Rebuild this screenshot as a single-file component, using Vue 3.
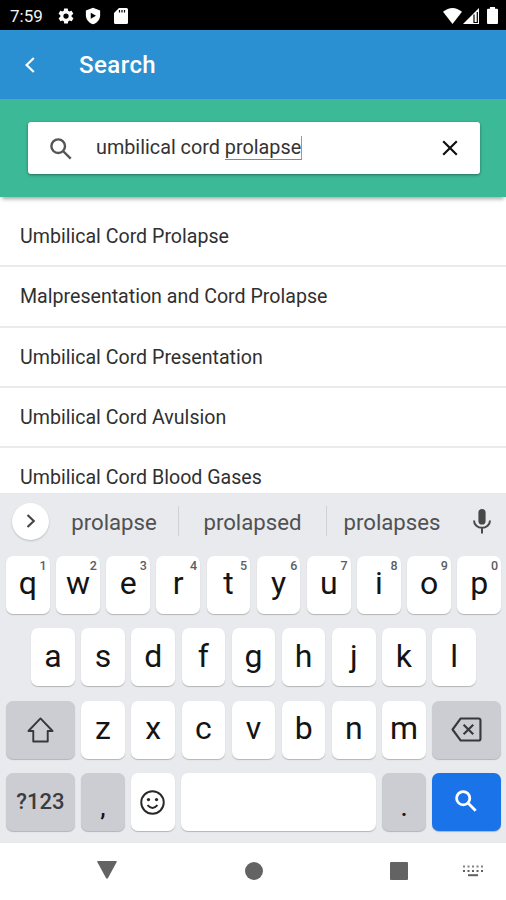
<script setup>
const results = [
  'Umbilical Cord Prolapse',
  'Malpresentation and Cord Prolapse',
  'Umbilical Cord Presentation',
  'Umbilical Cord Avulsion',
  'Umbilical Cord Blood Gases'
]
const topRow = [...'qwertyuiop'].map((letter, i) => ({ letter, hint: (i + 1) % 10 }))
const homeRow = [...'asdfghjkl']
const bottomRow = [...'zxcvbnm']
</script>

<template>
  <div class="screen">
    <div class="status">
      <span class="time">7:59</span>
      <svg class="st-gear" viewBox="0 0 24 24"><path fill="#fff" fill-rule="evenodd" d="M19.4 13c.1-.3.1-.7.1-1s0-.7-.1-1l2.1-1.6c.2-.2.3-.4.1-.7l-2-3.4c-.1-.3-.4-.3-.6-.3l-2.5 1c-.5-.4-1.1-.7-1.7-1l-.4-2.600c0-.3-.2-.4-.5-.4h-4c-.2 0-.5.100-.5.400L9 5c-.6.300-1.200.600-1.700 1l-2.500-1c-.2-.1-.5 0-.6.300l-2 3.400c-.1.200-.1.500.1.700L4.500 11c0 .3-.1.700-.1 1s0 .7.100 1l-2.100 1.600c-.2.200-.3.400-.1.700l2 3.400c.1.300.4.300.6.300l2.500-1c.5.400 1.100.700 1.700 1l.4 2.600c0 .3.200.4.500.4h4c.2 0 .5-.1.500-.4L15 19c.6-.3 1.200-.6 1.700-1l2.500 1c.2.100.5 0 .6-.3l2-3.400c.1-.2.100-.5-.1-.7L19.400 13zM12 15.500a3.500 3.500 0 1 1 0-7 3.500 3.500 0 0 1 0 7z"/></svg>
      <svg class="st-shield" viewBox="0 0 24 24"><path fill="#fff" d="M12 1 2.500 4.500V11c0 5.600 4 10.400 9.500 12 5.500-1.600 9.500-6.400 9.500-12V4.500z"/><path d="M9 7.500v8l7-4z"/></svg>
      <svg class="st-card" viewBox="0 0 14 16"><path fill="#fff" d="M5 0h7.500Q14 0 14 1.500v13q0 1.500-1.500 1.500h-11Q0 16 0 14.500V5z"/><path stroke="#000" stroke-width="1.200" d="M5.500 2v2.500M8 2v2.500M10.500 2v2.500"/></svg>
      <span class="grow"></span>
      <svg class="st-wifi" viewBox="0 0 19 16"><path fill="#fff" d="M0 3.800Q9.500-3.800 19 3.800L9.500 16z"/></svg>
      <svg class="st-cell" viewBox="0 0 16 16"><path fill="#fff" d="M16 0v16H0z"/><path stroke="#000" stroke-width="1.200" fill="none" d="M11 6.500v8h3.300V4"/></svg>
      <svg class="st-batt" viewBox="0 0 11 17"><path fill="#fff" d="M3 0h5v1.800h2Q11 1.800 11 3v13q0 1-1 1H1q-1 0-1-1V3q0-1.200 1-1.200h2z"/></svg>
    </div>

    <header class="header">
      <svg class="back" viewBox="0 0 10 16"><path fill="none" stroke="#fff" stroke-width="2.200" d="M8.800 1 1.600 8l7.200 7"/></svg>
      <h1>Search</h1>
    </header>

    <section class="band">
      <div class="box">
        <svg class="lens" viewBox="0 0 22 22"><circle cx="8.200" cy="8.200" r="6.800"/><path d="m13 13 7.700 7.700"/></svg>
        <div class="query">umbilical cord <span class="composing">prolapse</span></div>
        <svg class="clear" viewBox="0 0 16 16"><path d="m1.200 1.200 13.600 13.600M14.800 1.200 1.200 14.800"/></svg>
      </div>
    </section>

    <ul class="list">
      <li v-for="r in results" :key="r">{{ r }}</li>
    </ul>

    <section class="keyboard">
      <div class="suggest">
        <span class="expand"><svg viewBox="0 0 10 14"><path fill="none" stroke="#444" stroke-width="2.100" d="m1.500 1 6.300 6-6.300 6"/></svg></span>
        <span class="word first">prolapse</span>
        <span class="word second">prolapsed</span>
        <span class="word third">prolapses</span>
        <svg class="mic" viewBox="0 0 18 25"><rect x="5.400" y="0" width="7.200" height="15.500" rx="3.600" fill="#484848"/><path fill="none" stroke="#484848" stroke-width="2" d="M1 11.500a8 7.300 0 0 0 16 0M9 18.800v5.700"/></svg>
      </div>

      <div class="keys">
        <div class="row">
          <span v-for="k in topRow" :key="k.letter" class="key"><span>{{ k.letter }}</span><small>{{ k.hint }}</small></span>
        </div>
        <div class="row home">
          <span v-for="k in homeRow" :key="k" class="key"><span>{{ k }}</span></span>
        </div>
        <div class="row">
          <span class="key wide grey"><svg class="shift" viewBox="0 0 28 27"><path fill="none" stroke="#37383b" stroke-width="2" stroke-linejoin="round" d="M14 1.500 1.500 14.500H6.500v11h15v-11h5z"/></svg></span>
          <span v-for="k in bottomRow" :key="k" class="key"><span>{{ k }}</span></span>
          <span class="key wide grey"><svg class="erase" viewBox="0 0 32 26"><path fill="none" stroke="#37383b" stroke-width="2.200" stroke-linejoin="round" d="M10 1.500h18.500q2 0 2 2v19q0 2-2 2H10L1.500 13zM13 8l10 10M23 8 13 18"/></svg></span>
        </div>
        <div class="row">
          <span class="key wide grey mode">?123</span>
          <span class="key grey punct"><span>,</span></span>
          <span class="key"><svg class="smile" viewBox="0 0 26 26"><g fill="none" stroke="#27282a" stroke-width="2"><circle cx="13" cy="13" r="11.700"/><path d="M7.800 15.800q5.200 5.800 10.400 0"/></g><circle cx="8.800" cy="10" r="1.700" fill="#27282a"/><circle cx="17.200" cy="10" r="1.700" fill="#27282a"/></svg></span>
          <span class="key space"></span>
          <span class="key grey punct"><span>.</span></span>
          <span class="key wide blue"><svg class="go" viewBox="0 0 22 22"><circle cx="8.200" cy="8.200" r="6.600"/><path d="m13 13 7.700 7.700"/></svg></span>
        </div>
      </div>
    </section>

    <nav class="nav">
      <svg class="n-back" viewBox="0 0 20 18"><path fill="#636363" d="M.8 0h18.400q1 0 .5 1L11 17q-1 1.500-2 0L.3 1Q-.2 0 .8 0z"/></svg>
      <span class="n-home"></span>
      <span class="n-recent"></span>
      <svg class="n-kbd" viewBox="0 0 20 12"><path stroke="#808080" stroke-width="2" stroke-dasharray="2 2.500" d="M0 1.500h20"/><path stroke="#606060" stroke-width="2" stroke-dasharray="2 2.500" d="M0 6h20"/><path stroke="#606060" stroke-width="2" d="M5 10.200h10"/></svg>
    </nav>
  </div>
</template>

<style>
body { margin: 0; }
</style>

<style scoped>
* { box-sizing: border-box; }
svg { display: block; flex: none; overflow: visible; }
.screen { width: 506px; height: 900px; display: flex; flex-direction: column; overflow: hidden; background: #fff; font-family: Roboto, "Liberation Sans", sans-serif; }
.status { flex: none; height: 30px; background: #000; display: flex; align-items: center; padding: 1px 8px 0 10px; color: #f4f4f4; }
.time { width: 47px; font-size: 17px; line-height: 30px; }
.grow { flex: 1; }
.st-gear { width: 18px; height: 18px; }
.st-shield { width: 18px; height: 18px; margin-left: 9px; }
.st-card { width: 14px; height: 16px; margin-left: 12px; }
.st-wifi { width: 19px; height: 16px; }
.st-cell { width: 16px; height: 16px; margin-left: 1px; }
.st-batt { width: 11px; height: 17px; margin-left: 8px; }
.header { flex: none; height: 69px; background: #2b90d2; display: flex; align-items: center; padding-left: 25px; }
.back { width: 10px; height: 16px; }
h1 { margin: 0 0 0 44px; color: #fff; font-size: 24px; line-height: 30px; font-weight: 500; letter-spacing: .45px; }
.band { flex: none; height: 98px; background: #3cb996; padding: 23px 26px 0 28px; box-shadow: 0 4px 4px -2px rgba(0,0,0,.35); position: relative; }
.box { height: 52px; background: #fff; border-radius: 3px; display: flex; align-items: center; padding: 0 22px; box-shadow: 0 1px 3px rgba(0,0,0,.4); }
.lens { width: 22px; height: 22px; margin-top: 1px; }
.lens circle, .lens path { fill: none; stroke: #555; stroke-width: 2.4; }
.query { flex: 1; margin-left: 24px; font-size: 19.8px; line-height: 24px; color: #333; white-space: pre; margin-top: -1px; }
.composing { display: inline-block; height: 24px; border-bottom: 1px solid #888; border-right: 1px solid #999; }
.clear { width: 16px; height: 16px; }
.clear path { stroke: #111; stroke-width: 2.2; }
.list { flex: none; height: 296px; margin: 0; padding: 10px 0 0; list-style: none; overflow: hidden; color: #303030; font-size: 19.6px; }
.list li { height: 60.3px; line-height: 59px; padding-left: 20px; border-bottom: 2px solid #ebebeb; white-space: nowrap; }
.keyboard { flex: none; height: 349.5px; background: #e8eaed; }
.suggest { height: 62.7px; display: flex; align-items: center; padding: 0 15px 6.7px 12px; color: #505153; font-size: 22.2px; }
.expand { flex: none; width: 37px; height: 37px; border-radius: 50%; background: #fff; display: flex; align-items: center; justify-content: center; box-shadow: 0 1px 2px rgba(0,0,0,.2); }
.expand svg { width: 10px; height: 14px; }
.word { flex: none; height: 30px; line-height: 33px; text-align: center; }
.first { width: 130px; padding-left: 1px; border-right: 1px solid #cfd1d4; }
.second { width: 148px; border-right: 1px solid #cfd1d4; }
.third { width: 130px; }
.mic { width: 18px; height: 25px; margin-left: auto; }
.keys { display: flex; flex-direction: column; gap: 14.5px; padding: 0 5px 0 6px; }
.row { display: flex; justify-content: space-between; height: 58px; }
.home { padding: 0 25.1px; }
.key { flex: none; width: 43.6px; height: 58px; border-radius: 7px; background: #fff; box-shadow: 0 1px 1px rgba(0,0,0,.23); display: flex; align-items: center; justify-content: center; position: relative; color: #141414; font-size: 32px; line-height: 38px; }
.key > span { margin-top: -3px; }
.key small { position: absolute; right: 3px; top: 2px; font-size: 12.5px; line-height: 15px; font-weight: 500; color: #5c5d5f; }
.wide { width: 68.6px; }
.grey { background: #cbcdd2; }
.mode { font-size: 22px; color: #3b3c3f; font-weight: 500; }
.punct { font-size: 24px; font-weight: 500; }
.punct > span { margin-top: 12px; }
.space { width: 194.5px; }
.blue { background: #1a73e8; }
.shift { width: 27px; height: 26px; }
.erase { width: 31px; height: 25px; }
.smile { width: 25px; height: 25px; }
.go { width: 22px; height: 22px; margin: -3px 2px 0 0; }
.go circle, .go path { fill: none; stroke: #fff; stroke-width: 2.8; }
.nav { flex: none; height: 57.5px; background: #fff; display: flex; align-items: center; padding-left: 97px; }
.n-back { width: 20px; height: 18px; margin-top: -3px; }
.n-home { width: 18px; height: 18px; border-radius: 50%; background: #636363; margin-left: 127.5px; }
.n-recent { width: 18px; height: 18px; border-radius: 1px; background: #636363; margin-left: 127.5px; }
.n-kbd { width: 20px; height: 12px; margin-left: 55px; }
</style>
